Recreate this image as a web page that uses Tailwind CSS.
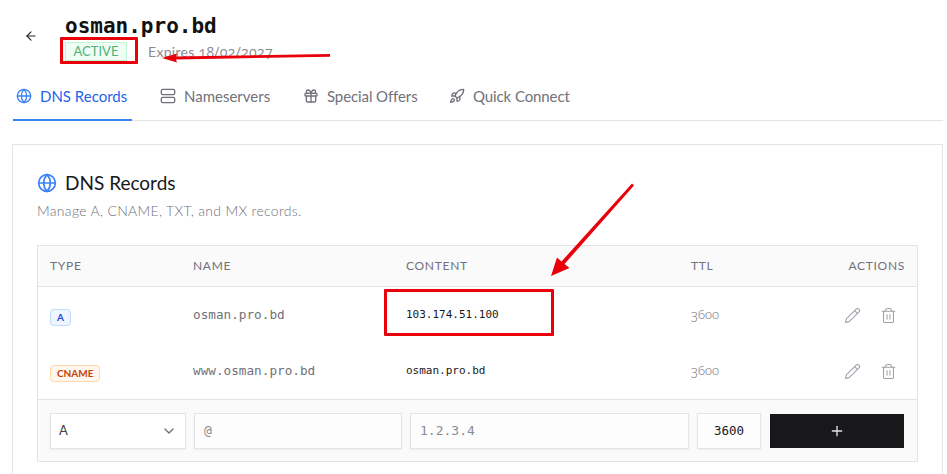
<!DOCTYPE html>
<html lang="en">
<head>
    <meta charset="UTF-8">
    <meta name="viewport" content="width=device-width, initial-scale=1.0">
    <title>osman.pro.bd</title>
    <script src="https://cdn.jsdelivr.net/npm/@tailwindcss/browser@4"></script>
</head>
<body class="bg-white overflow-hidden h-[474px] relative font-['Lato','Open_Sans',sans-serif] text-[#71717a]">
    <div class="pl-[13px] pr-1">
        <!-- header -->
        <div class="flex items-start pl-[11px] pt-[13px] h-[87px]">
            <svg class="w-[14px] h-[14px] mt-[16px] text-[#27272a]" viewBox="0 0 24 24" fill="none" stroke="currentColor" stroke-width="2" stroke-linecap="round" stroke-linejoin="round"><path d="m12 19-7-7 7-7"/><path d="M19 12H5"/></svg>
            <div class="ml-[27px]">
                <h1 class="font-['DejaVu_Sans_Mono',monospace] font-bold text-[21px] leading-[27px] text-[#111]">osman.pro.bd</h1>
                <div class="flex items-start mt-[1px]">
                    <span class="mt-[1px] border border-[#bbf7d0] bg-[#f0fdf4] text-[#4bb37a] text-[13px] leading-[17px] w-[62px] text-center">ACTIVE</span>
                    <span class="ml-[21px] text-[14px] tracking-[0.3px] text-[#8a8a91]">Expires <span class="font-['Open_Sans'] oldstyle-nums">18/02/2027</span></span>
                </div>
            </div>
        </div>
        <!-- tabs -->
        <div class="flex h-[34px] border-b border-[#e4e4e7] text-[15px]">
            <a class="flex items-start gap-[8px] w-[119px] pl-[3px] h-[34px] border-b-2 border-[#3b82f6] text-[#2563eb]">
                <svg class="w-4 h-4 mt-[1px] text-[#3b82f6]" viewBox="0 0 24 24" fill="none" stroke="currentColor" stroke-width="2" stroke-linecap="round" stroke-linejoin="round"><circle cx="12" cy="12" r="10"/><path d="M12 2a14.5 14.5 0 0 0 0 20 14.5 14.5 0 0 0 0-20"/><path d="M2 12h20"/></svg>
                <span class="leading-[18px]">DNS Records</span>
            </a>
            <a class="flex items-start gap-[8px] ml-[28px] w-[116px]">
                <svg class="w-4 h-4 mt-[1px]" viewBox="0 0 24 24" fill="none" stroke="currentColor" stroke-width="2" stroke-linecap="round" stroke-linejoin="round"><rect width="20" height="8" x="2" y="2" rx="2"/><rect width="20" height="8" x="2" y="14" rx="2"/></svg>
                <span class="leading-[18px]">Nameservers</span>
            </a>
            <a class="flex items-start gap-[8px] ml-[27px] w-[122px]">
                <svg class="w-4 h-4 mt-[1px]" viewBox="0 0 24 24" fill="none" stroke="currentColor" stroke-width="2" stroke-linecap="round" stroke-linejoin="round"><rect x="3" y="8" width="18" height="4" rx="1"/><path d="M12 8v13"/><path d="M19 12v7a2 2 0 0 1-2 2H7a2 2 0 0 1-2-2v-7"/><path d="M7.5 8a2.5 2.5 0 0 1 0-5A4.8 8 0 0 1 12 8a4.8 8 0 0 1 4.5-5 2.5 2.5 0 0 1 0 5"/></svg>
                <span class="leading-[18px] tracking-[-0.1px]">Special Offers</span>
            </a>
            <a class="flex items-start gap-[8px] ml-[24px]">
                <svg class="w-4 h-4 mt-[1px]" viewBox="0 0 24 24" fill="none" stroke="currentColor" stroke-width="2" stroke-linecap="round" stroke-linejoin="round"><path d="M4.5 16.5c-1.5 1.26-2 5-2 5s3.74-.5 5-2c.71-.84.7-2.13-.09-2.91a2.18 2.18 0 0 0-2.91-.09z"/><path d="m12 15-3-3a22 22 0 0 1 2-3.95A12.88 12.88 0 0 1 22 2c0 2.72-.78 7.5-6 11a22.35 22.35 0 0 1-4 2z"/><path d="M9 12H4s.55-3.03 2-4c1.62-1.08 5 0 5 0"/><path d="M12 15v5s3.03-.55 4-2c1.08-1.62 0-5 0-5"/></svg>
                <span class="leading-[18px] tracking-[-0.1px]">Quick Connect</span>
            </a>
        </div>
        <!-- card -->
        <div class="ml-[-1px] mt-[23px] w-[931px] border border-[#e4e4e7] px-[24px] pt-[26px] h-[340px]">
            <div class="flex items-center gap-[8px] h-[24px]">
                <svg class="w-5 h-5 text-[#3b82f6]" viewBox="0 0 24 24" fill="none" stroke="currentColor" stroke-width="2" stroke-linecap="round" stroke-linejoin="round"><circle cx="12" cy="12" r="10"/><path d="M12 2a14.5 14.5 0 0 0 0 20 14.5 14.5 0 0 0 0-20"/><path d="M2 12h20"/></svg>
                <h2 class="text-[19px] text-[#18181b]">DNS Records</h2>
            </div>
            <p class="mt-[6px] text-[14px] font-light tracking-[0.3px] leading-[20px] text-[#71717a]">Manage A, CNAME, TXT, and MX records.</p>
            <!-- table -->
            <div class="mt-[24px] w-[881px] border border-[#e4e4e7]">
                <div class="grid grid-cols-[143px_213px_285px_1fr] items-center h-[41px] bg-[#fafafa] border-b border-[#e4e4e7] text-[12px] tracking-[0.7px]">
                    <div class="px-3">TYPE</div>
                    <div class="px-3">NAME</div>
                    <div class="px-3">CONTENT</div>
                    <div class="px-3 flex justify-between"><span>TTL</span><span>ACTIONS</span></div>
                </div>
                <div class="grid grid-cols-[143px_213px_285px_1fr] items-center h-[56px]">
                    <div class="px-3"><span class="inline-block border border-[#bfdbfe] bg-[#eff6ff] text-[#1d4ed8] rounded-[4px] font-bold text-[10px] leading-[15px] px-[6px]">A</span></div>
                    <div class="px-3 font-['DejaVu_Sans_Mono',monospace] text-[12.7px]">osman.pro.bd</div>
                    <div class="px-3 font-['DejaVu_Sans_Mono',monospace] text-[11px] text-[#18181b]">103.174.51.100</div>
                    <div class="pl-3 pr-[20px] flex items-center justify-between">
                        <span class="font-['Open_Sans'] font-light text-[13px] text-[#71717a] oldstyle-nums">3600</span>
                        <span class="flex items-center gap-[19px] text-[#a1a1aa]">
                            <svg class="w-[17px] h-[17px]" viewBox="0 0 24 24" fill="none" stroke="currentColor" stroke-width="1.5" stroke-linecap="round" stroke-linejoin="round"><path d="M21.174 6.812a1 1 0 0 0-3.986-3.987L3.842 16.174a2 2 0 0 0-.5.83l-1.321 4.352a.5.5 0 0 0 .623.622l4.353-1.32a2 2 0 0 0 .83-.497z"/><path d="m15 5 4 4"/></svg>
                            <svg class="w-[17px] h-[17px]" viewBox="0 0 24 24" fill="none" stroke="currentColor" stroke-width="1.5" stroke-linecap="round" stroke-linejoin="round"><path d="M3 6h18"/><path d="M19 6v14c0 1-1 2-2 2H7c-1 0-2-1-2-2V6"/><path d="M8 6V4c0-1 1-2 2-2h4c1 0 2 1 2 2v2"/><line x1="10" x2="10" y1="11" y2="17"/><line x1="14" x2="14" y1="11" y2="17"/></svg>
                        </span>
                    </div>
                </div>
                <div class="grid grid-cols-[143px_213px_285px_1fr] items-center h-[56px]">
                    <div class="px-3"><span class="inline-block border border-[#fed7aa] bg-[#fff7ed] text-[#c2410c] rounded-[4px] font-bold text-[10px] leading-[15px] px-[6px]">CNAME</span></div>
                    <div class="px-3 font-['DejaVu_Sans_Mono',monospace] text-[12.7px]">www.osman.pro.bd</div>
                    <div class="px-3 font-['DejaVu_Sans_Mono',monospace] text-[11px] text-[#18181b]">osman.pro.bd</div>
                    <div class="pl-3 pr-[20px] flex items-center justify-between">
                        <span class="font-['Open_Sans'] font-light text-[13px] text-[#71717a] oldstyle-nums">3600</span>
                        <span class="flex items-center gap-[19px] text-[#a1a1aa]">
                            <svg class="w-[17px] h-[17px]" viewBox="0 0 24 24" fill="none" stroke="currentColor" stroke-width="1.5" stroke-linecap="round" stroke-linejoin="round"><path d="M21.174 6.812a1 1 0 0 0-3.986-3.987L3.842 16.174a2 2 0 0 0-.5.83l-1.321 4.352a.5.5 0 0 0 .623.622l4.353-1.32a2 2 0 0 0 .83-.497z"/><path d="m15 5 4 4"/></svg>
                            <svg class="w-[17px] h-[17px]" viewBox="0 0 24 24" fill="none" stroke="currentColor" stroke-width="1.5" stroke-linecap="round" stroke-linejoin="round"><path d="M3 6h18"/><path d="M19 6v14c0 1-1 2-2 2H7c-1 0-2-1-2-2V6"/><path d="M8 6V4c0-1 1-2 2-2h4c1 0 2 1 2 2v2"/><line x1="10" x2="10" y1="11" y2="17"/><line x1="14" x2="14" y1="11" y2="17"/></svg>
                        </span>
                    </div>
                </div>
                <!-- add record -->
                <div class="flex items-center gap-2 h-[62px] px-3 bg-[#fafafa] border-t border-[#e4e4e7]">
                    <div class="flex items-center justify-between w-[136px] h-[36px] px-2 bg-white border border-[#e4e4e7] shadow-xs text-[13px] text-[#3f3f46]">
                        <span>A</span>
                        <svg class="w-4 h-4 text-[#71717a]" viewBox="0 0 24 24" fill="none" stroke="currentColor" stroke-width="2" stroke-linecap="round" stroke-linejoin="round"><path d="m6 9 6 6 6-6"/></svg>
                    </div>
                    <input class="w-[208px] h-[36px] pl-[9px] pr-2 bg-white/50 border border-[#e4e4e7] shadow-xs font-['DejaVu_Sans_Mono',monospace] text-[13px] placeholder:text-[#8a8a91]" placeholder="@">
                    <input class="w-[279px] h-[36px] pl-[9px] pr-2 bg-white/50 border border-[#e4e4e7] shadow-xs font-['DejaVu_Sans_Mono',monospace] text-[13px] placeholder:text-[#8a8a91]" placeholder="1.2.3.4">
                    <input class="w-[64px] h-[36px] bg-white/50 border border-[#e4e4e7] shadow-xs text-center font-['DejaVu_Sans_Mono',monospace] text-[12.5px] text-[#18181b]" value="3600">
                    <button class="flex items-center justify-center w-[134px] h-[34px] ml-[1px] bg-[#18181b] text-[#e4e4e7]">
                        <svg class="w-4 h-4" viewBox="0 0 24 24" fill="none" stroke="currentColor" stroke-width="2" stroke-linecap="round" stroke-linejoin="round"><path d="M5 12h14"/><path d="M12 5v14"/></svg>
                    </button>
                </div>
            </div>
        </div>
    </div>

    <!-- red annotations over the screenshot -->
    <div class="absolute left-[60px] top-[37px] w-[78px] h-[27px] border-[3px] border-[#e8000b] rounded-[1px]"></div>
    <div class="absolute left-[384px] top-[289px] w-[170px] h-[47px] border-[3px] border-[#e8000b] rounded-[1px]"></div>
    <svg class="absolute left-0 top-0 w-[947px] h-[474px] pointer-events-none" viewBox="0 0 947 474" fill="#e8000b">
        <path d="M330 54 L176 56.6 L177 53.5 L162 58 L177 62.5 L176 59.4 L330 56.8 Z"/>
        <path d="M632 183.5 L561.5 261.5 L557 257.5 L551 276 L569.5 268 L564.5 264 L634 185.5 Z"/>
    </svg>
</body>
</html>
